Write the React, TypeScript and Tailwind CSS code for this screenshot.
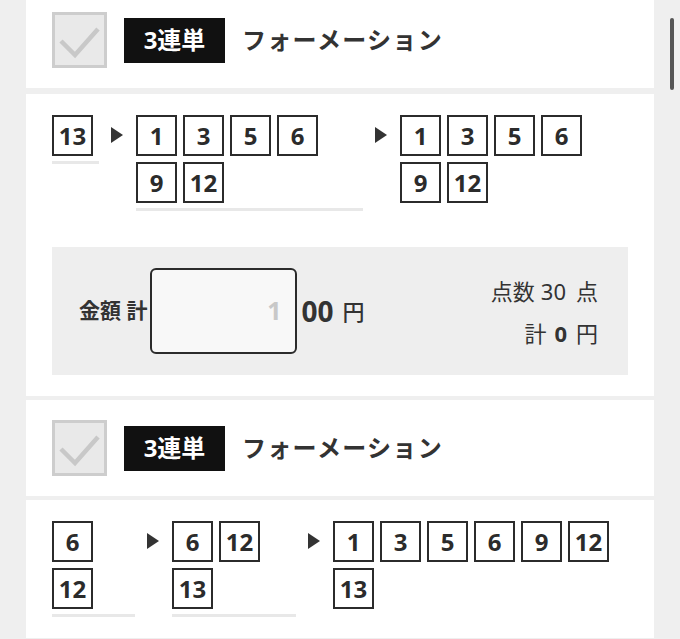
import React from "react";

const FONT = { fontFamily: "'Noto Sans', 'Noto Sans CJK JP', sans-serif" };

function Check() {
  return (
    <div className="w-[55px] h-[56px] shrink-0 bg-[#e9e9e9] border-[3px] border-[#cdcdcd]">
      <svg width="49" height="50" viewBox="0 0 49 50">
        <path d="M6 26 L20 40 L43 14" fill="none" stroke="#c8c8c8" strokeWidth="4.5" />
      </svg>
    </div>
  );
}

function Header({ className = "" }: { className?: string }) {
  return (
    <div className={`bg-white h-[96px] flex items-center px-[26px] ${className}`}>
      <Check />
      <div className="ml-[17px] w-[101px] h-[45px] bg-[#111] text-white text-[24px] font-bold flex items-center justify-center">
        3連単
      </div>
      <div className="ml-[17px] text-[24px] font-bold text-[#333] tracking-[1.3px]">フォーメーション</div>
    </div>
  );
}

function Box({ n }: { n: string }) {
  return (
    <div className="w-[41px] h-[41px] border-2 border-[#2b2b2b] flex items-center justify-center text-[24px] font-bold text-[#2b2b2b] leading-none">
      {n}
    </div>
  );
}

function Arrow() {
  return (
    <div className="w-[12px] ml-[12px] mr-[13px] shrink-0 pt-[12px]">
      <svg width="12" height="16" viewBox="0 0 12 16">
        <path d="M0 0 L12 8 L0 16 Z" fill="#333" />
      </svg>
    </div>
  );
}

function Col({ nums, w, underline = true }: { nums: string[]; w: string; underline?: boolean }) {
  return (
    <div className={`${w} shrink-0 self-start ${underline ? "pb-[5px] border-b-[3px] border-[#e8e8e8]" : ""}`}>
      <div className="flex flex-wrap gap-[6px]">
        {nums.map((n, i) => (
          <Box key={i} n={n} />
        ))}
      </div>
    </div>
  );
}

export default function App() {
  return (
    <div className="relative h-[639px] overflow-hidden bg-[#efefef]" style={FONT}>
      <div className="mx-[26px] -mt-[8px] flex flex-col">
        <Header />
        <div className="bg-white mt-[6px] px-[26px] pt-[21px] pb-[21px]">
          <div className="flex">
            <Col nums={["13"]} w="w-[47px]" />
            <Arrow />
            <Col nums={["1", "3", "5", "6", "9", "12"]} w="w-[227px]" />
            <Arrow />
            <Col nums={["1", "3", "5", "6", "9", "12"]} w="w-[226px]" underline={false} />
          </div>
          <div className="mt-[36px] h-[128px] bg-[#eeeeee] flex items-center pl-[27px] pr-[30px] text-[#333]">
            <div className="text-[21px] font-bold">金額 計</div>
            <div className="ml-[3px] w-[147px] h-[86px] rounded-[6px] border-2 border-[#2b2b2b] bg-[#f8f8f8] flex items-center justify-end pr-[14px] text-[25px] font-bold text-[#c8c8c8]">
              1
            </div>
            <div className="ml-[4px] text-[28px] font-bold">00</div>
            <div className="ml-[9px] text-[22px] font-medium">円</div>
            <div className="ml-auto flex flex-col items-end text-[22px] leading-[42px] pt-[2px]">
              <div className="flex">
                <span>点数</span>
                <span className="ml-[6px]">30</span>
                <span className="ml-[10px]">点</span>
              </div>
              <div className="flex">
                <span>計</span>
                <span className="ml-[8px] font-bold">0</span>
                <span className="ml-[9px]">円</span>
              </div>
            </div>
          </div>
        </div>
        <Header className="mt-[4px]" />
        <div className="bg-white mt-[4px] px-[26px] pt-[21px] pb-[21px]">
          <div className="flex">
            <Col nums={["6", "12"]} w="w-[83px]" />
            <Arrow />
            <Col nums={["6", "12", "13"]} w="w-[124px]" />
            <Arrow />
            <Col nums={["1", "3", "5", "6", "9", "12", "13"]} w="w-[292px]" underline={false} />
          </div>
        </div>
      </div>
      <div className="absolute left-[670px] top-[18px] w-[4px] h-[72px] rounded-full bg-[#555]" />
    </div>
  );
}
